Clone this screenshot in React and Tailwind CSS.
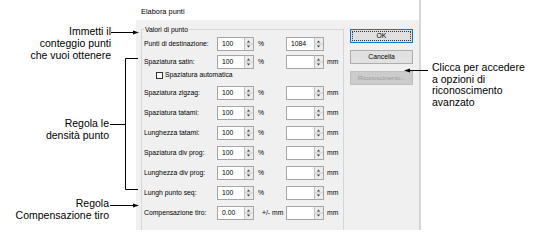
import React from "react";

const dlgFont = { fontFamily: '"Liberation Sans", Arial, sans-serif' };

function Spinner() {
  return (
    <svg width="9" height="12" viewBox="0 0 9 12" className="shrink-0 block">
      <rect x="0" y="0" width="9" height="12" fill="#ececec" />
      <line x1="0.5" y1="0" x2="0.5" y2="12" stroke="#c4c4c4" />
      <line x1="0" y1="6" x2="9" y2="6" stroke="#c9c9c9" />
      <polygon points="2.8,4.6 6.2,4.6 4.5,2.4" fill="#444" />
      <polygon points="2.8,7.4 6.2,7.4 4.5,9.6" fill="#444" />
    </svg>
  );
}

function NumInput({ value = "", w = "w-[37px]" }) {
  return (
    <div className={`flex h-[14px] ${w} shrink-0 border border-[#a6a6a6] bg-white`}>
      <div className="flex-1 pl-[4px] text-[6.8px] leading-[12px] text-black">{value}</div>
      <Spinner />
    </div>
  );
}

function Row({ label, v1 = "100", unit1 = "%", v2 = "", unitPad = "pl-[4px]", mm = true }) {
  return (
    <div className="flex h-[14px] items-center">
      <div className="w-[75px] shrink-0 pl-[2px] text-[6.8px] leading-[14px] text-black whitespace-nowrap">{label}</div>
      <NumInput value={v1} />
      <div className={`w-[32px] shrink-0 ${unitPad} text-[6.8px] text-black whitespace-nowrap`}>{unit1}</div>
      <NumInput value={v2} w="w-[38px]" />
      {mm && <div className="pl-[3px] text-[6.8px] text-black">mm</div>}
    </div>
  );
}

function Btn({ children, variant }) {
  if (variant === "ok") {
    return (
      <div className="flex h-[14px] w-[63px] items-center justify-center border border-[#0078d7] bg-[#e1e1e1] p-[1px]">
        <div className="flex h-full w-full items-center justify-center border border-dotted border-[#333] text-[6.8px] text-black">
          {children}
        </div>
      </div>
    );
  }
  if (variant === "disabled") {
    return (
      <div className="flex h-[14px] w-[63px] items-center justify-center overflow-hidden border border-[#bfbfbf] bg-[#cccccc] text-[6.2px] tracking-[-0.1px] text-[#9a9a9a] whitespace-nowrap">
        {children}
      </div>
    );
  }
  return (
    <div className="flex h-[14px] w-[63px] items-center justify-center border border-[#adadad] bg-[#e1e1e1] text-[6.8px] text-black">
      {children}
    </div>
  );
}

export default function App() {
  const annFont = { fontFamily: '"Liberation Sans", Arial, sans-serif' };
  return (
    <div className="relative h-[243px] w-[533px] overflow-hidden bg-white flex">
      {/* left annotations */}
      <div className="w-[136px] shrink-0 pr-[25px] text-right text-[10.5px] leading-[12px] text-black" style={annFont}>
        <div className="mt-[25px]">
          Immetti il
          <br />
          conteggio punti
          <br />
          che vuoi ottenere
        </div>
        <div className="mt-[56px] pr-[2px]">
          Regola le
          <br />
          densità punto
        </div>
        <div className="mt-[56px] pr-[2px]">
          Regola
          <br />
          Compensazione tiro
        </div>
      </div>

      {/* dialog */}
      <div className="h-[230px] w-[285px] shrink-0 flex flex-col border-r-2 border-[#d6d6d6]" style={dlgFont}>
        <div className="h-[20px] pl-[5px] pt-[7px] text-[7.4px] leading-[10px] text-black">Elabora punti</div>
        <div className="h-[210px] overflow-hidden bg-[#f0f0f0] flex">
          <div className="relative ml-[5px] mt-[9px] h-[260px] w-[203px] shrink-0 border border-[#d7d7d7]">
            <div className="absolute left-[2px] top-[-5px] bg-[#f0f0f0] px-[1px] text-[6.8px] leading-[9px] text-black">
              Valori di punto
            </div>
            <div className="flex flex-col pt-[7px]">
              <Row label="Punti di destinazione:" v2="1084" mm={false} />
              <div className="h-[4px]" />
              <Row label="Spaziatura satin:" />
              <div className="flex h-[12px] items-center pl-[14px]">
                <div className="h-[7px] w-[7px] border border-[#333] bg-white" />
                <div className="pl-[2px] text-[6.8px] text-black">Spaziatura automatica</div>
              </div>
              <div className="h-[5px]" />
              <div className="flex flex-col gap-[6px]">
                <Row label="Spaziatura zigzag:" />
                <Row label="Spaziatura tatami:" />
                <Row label="Lunghezza tatami:" />
                <Row label="Spaziatura div prog:" />
                <Row label="Lunghezza div prog:" />
                <Row label="Lungh punto seq:" />
                <Row label="Compensazione tiro:" v1="0.00" unit1="+/- mm" unitPad="pl-[8px]" />
              </div>
            </div>
          </div>
          <div className="ml-[6px] mt-[9px] flex flex-col gap-[7px]">
            <Btn variant="ok">OK</Btn>
            <Btn>Cancella</Btn>
            <Btn variant="disabled">Riconoscimento...</Btn>
          </div>
        </div>
      </div>

      {/* right annotation */}
      <div className="flex-1 pl-[11px] pt-[62px] text-[10.5px] leading-[11.5px] text-black" style={annFont}>
        Clicca per accedere
        <br />
        a opzioni di
        <br />
        riconoscimento
        <br />
        avanzato
      </div>

      {/* callout lines overlay */}
      <svg className="pointer-events-none absolute left-0 top-0" width="533" height="243" viewBox="0 0 533 243">
        <g stroke="#000" strokeWidth="1" fill="none">
          <path d="M111 32.5 H134" />
          <path d="M110 124.5 H125.5" />
          <path d="M138 58.5 H125.5 V189.5 H138" />
          <path d="M110 205.5 H134" />
          <path d="M428 70.5 H409" />
        </g>
        <g fill="#000">
          <polygon points="139,32.5 133,30.5 133,34.5" />
          <polygon points="139,205.5 133,203.5 133,207.5" />
          <polygon points="404,70.5 410,68.5 410,72.5" />
        </g>
      </svg>
    </div>
  );
}
